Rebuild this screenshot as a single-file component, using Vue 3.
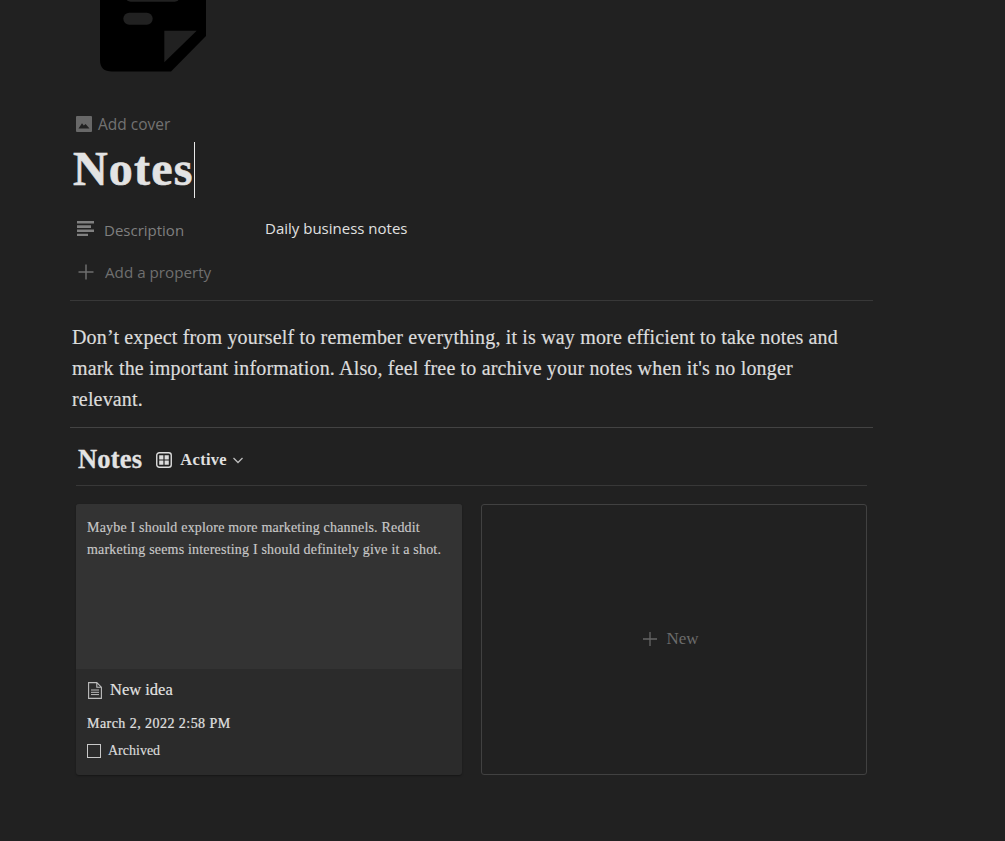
<template>
  <div class="page">
    <svg class="page-icon" width="106" height="72" viewBox="0 0 106 72">
      <path d="M0 0H106V36L71 71.5H12Q0 71.5 0 60Z" fill="#000" />
      <path d="M64.3 30.7H96.7L64.3 62.3Z" fill="#212121" />
      <rect x="23.3" y="12.7" width="29.4" height="12" rx="6" fill="#212121" />
      <rect x="25.7" y="-10" width="54" height="11.7" rx="5" fill="#212121" />
    </svg>

    <div class="add-cover">
      <svg width="16" height="16" viewBox="0 0 16 16">
        <rect width="16" height="16" rx="1" fill="#686868" />
        <path d="M2.5 12.5 6 7.2l1.8 2.4L9.6 8l3.9 4.5Z" fill="#212121" />
      </svg>
      <span>Add cover</span>
    </div>

    <h1 class="title">Notes<span class="caret"></span></h1>

    <div class="prop prop-desc">
      <div class="prop-name">
        <svg class="desc-icon" width="17" height="16" viewBox="0 0 17 16">
          <path d="M0 1h17v2.6H0zM0 5.3h14v2.6H0zM0 9.6h17v2.4H0zM0 13.7h11v2.3H0z" fill="#808080" />
        </svg>
        <span>Description</span>
      </div>
      <div class="prop-value">Daily business notes</div>
    </div>

    <div class="prop-add">
      <svg width="16" height="16" viewBox="0 0 16 16">
        <path d="M8 0.5v15M0.5 8h15" stroke="#6e6e6e" stroke-width="1.5" fill="none" />
      </svg>
      <span>Add a property</span>
    </div>

    <div class="rule first"></div>

    <p class="intro">
      Don’t expect from yourself to remember everything, it is way more efficient to take notes and<br />
      mark the important information. Also, feel free to archive your notes when it's no longer<br />
      relevant.
    </p>

    <div class="rule second"></div>

    <div class="db-head">
      <span class="db-title">Notes</span>
      <svg class="view-icon" width="16" height="16" viewBox="0 0 16 16">
        <rect x="0.75" y="0.75" width="14.5" height="14.5" rx="2.5" fill="none" stroke="#dcdcdc" stroke-width="1.4" />
        <path d="M3.2 3.2h4.2v4.2H3.2zM8.6 3.2h4.2v4.2H8.6zM3.2 8.6h4.2v4.2H3.2zM8.6 8.6h4.2v4.2H8.6z" fill="#dcdcdc" />
      </svg>
      <span class="view-name">Active</span>
      <svg class="chevron" width="12" height="12" viewBox="0 0 12 12">
        <path d="M1.5 4l4.5 4.5L10.5 4" fill="none" stroke="#bdbdbd" stroke-width="1.3" />
      </svg>
    </div>

    <div class="gallery">
      <div class="card">
        <div class="cover">
          Maybe I should explore more marketing channels. Reddit<br />
          marketing seems interesting I should definitely give it a shot.
        </div>
        <div class="card-body">
          <div class="card-title">
            <svg width="14" height="17" viewBox="0 0 14 17">
              <path d="M.6.6h8.2l4.6 4.6v11.2H.6Z M8.8.6v4.6h4.6" fill="none" stroke="#bdbdbd" stroke-width="1.1" />
              <path d="M3 8h8M3 10.3h8M3 12.6h8" stroke="#bdbdbd" stroke-width="1" />
            </svg>
            <span>New idea</span>
          </div>
          <div class="card-date">March 2, 2022 2:58 PM</div>
          <div class="card-check">
            <span class="box"></span>
            <span>Archived</span>
          </div>
        </div>
      </div>

      <div class="new-card">
        <svg width="14" height="14" viewBox="0 0 14 14">
          <path d="M7 0v14M0 7h14" stroke="#666" stroke-width="1.3" fill="none" />
        </svg>
        <span>New</span>
      </div>
    </div>
  </div>
</template>

<script setup>
</script>

<style>
html,
body {
  margin: 0;
  background: #212121;
}
</style>

<style scoped>
.page {
  width: 1005px;
  height: 841px;
  overflow: hidden;
  box-sizing: border-box;
  background: #212121;
  padding-left: 70px;
  font-family: "Liberation Serif", serif;
  color: #e3e3e3;
}

.page-icon {
  display: block;
  margin-left: 30px;
}

.add-cover {
  display: flex;
  align-items: center;
  gap: 6px;
  margin: 42px 0 0 6px;
  height: 20px;
  font-family: "Open Sans", sans-serif;
  font-size: 15.5px;
  color: #727272;
}

.title {
  display: flex;
  margin: 8px 0 0 3px;
  height: 57px;
  font-size: 48px;
  line-height: 54px;
  font-weight: 700;
  letter-spacing: 1.2px;
  color: #e3e3e3;
  -webkit-text-stroke: 0.6px #e3e3e3;
}

.caret {
  width: 1.5px;
  height: 56px;
  background: #e8e8e8;
}

.prop {
  display: flex;
  align-items: center;
  margin: 20px 0 0 7px;
  height: 22px;
  font-family: "Open Sans", sans-serif;
  font-size: 15px;
}

.prop-name {
  display: flex;
  align-items: center;
  gap: 10px;
  width: 188px;
  color: #7f7f7f;
}

.desc-icon {
  margin-bottom: 4px;
}

.prop-value {
  color: #e0e0e0;
  margin-top: -5px;
}

.prop-add {
  display: flex;
  align-items: center;
  gap: 11px;
  margin: 20px 0 0 8px;
  height: 22px;
  font-family: "Open Sans", sans-serif;
  font-size: 15.2px;
  color: #6f6f6f;
}

.rule {
  width: 803px;
  height: 1px;
  background: #383838;
}

.rule.first {
  margin-top: 17px;
}

.intro {
  margin: 21px 0 0 2px;
  font-size: 20px;
  line-height: 31px;
  letter-spacing: 0.17px;
  color: #dcdcdc;
  -webkit-text-stroke: 0.2px #dcdcdc;
}

.rule.second {
  margin-top: 12px;
  background: #434343;
}

.db-head {
  display: flex;
  align-items: center;
  margin: 0 0 0 6px;
  padding: 6px 0 0 2px;
  width: 789px;
  height: 51px;
  border-bottom: 1px solid #383838;
}

.db-title {
  font-size: 26.5px;
  font-weight: 700;
  letter-spacing: 0.2px;
  color: #e3e3e3;
  -webkit-text-stroke: 0.3px #e3e3e3;
}

.view-icon {
  margin-left: 14px;
}

.view-name {
  margin-left: 8px;
  font-size: 16.5px;
  font-weight: 700;
  letter-spacing: 0.3px;
  color: #e0e0e0;
}

.chevron {
  margin-left: 5px;
}

.gallery {
  display: grid;
  grid-template-columns: 386px 386px;
  gap: 19px;
  margin: 18px 0 0 6px;
  height: 271px;
}

.card {
  display: flex;
  flex-direction: column;
  border-radius: 3px;
  overflow: hidden;
  background: #2b2b2b;
  box-shadow: 0 1px 2px rgba(0, 0, 0, 0.35);
}

.cover {
  box-sizing: border-box;
  height: 165px;
  padding: 13px 11px;
  background: #333;
  font-size: 14px;
  line-height: 22px;
  letter-spacing: 0.19px;
  color: #c8c8c8;
  -webkit-text-stroke: 0.15px #c8c8c8;
}

.card-body {
  padding: 0 11px;
}

.card-title {
  display: flex;
  align-items: center;
  gap: 8px;
  margin: 11px 0 0 1px;
  height: 20px;
  font-size: 16.5px;
  color: #e3e3e3;
  -webkit-text-stroke: 0.15px #e3e3e3;
}

.card-date {
  margin-top: 15px;
  font-size: 14px;
  line-height: 18px;
  letter-spacing: 0.45px;
  color: #e0e0e0;
  -webkit-text-stroke: 0.2px #e0e0e0;
}

.card-check {
  display: flex;
  align-items: center;
  gap: 7px;
  margin-top: 9px;
  font-size: 14px;
  line-height: 18px;
  color: #dcdcdc;
  -webkit-text-stroke: 0.15px #dcdcdc;
}

.box {
  box-sizing: border-box;
  width: 14px;
  height: 14px;
  border: 1.5px solid #c8c8c8;
}

.new-card {
  display: flex;
  align-items: center;
  justify-content: center;
  gap: 9px;
  box-sizing: border-box;
  padding: 0 6px 2px 0;
  border: 1px solid #414141;
  border-radius: 3px;
  font-size: 17px;
  color: #6c6c6c;
}
</style>
